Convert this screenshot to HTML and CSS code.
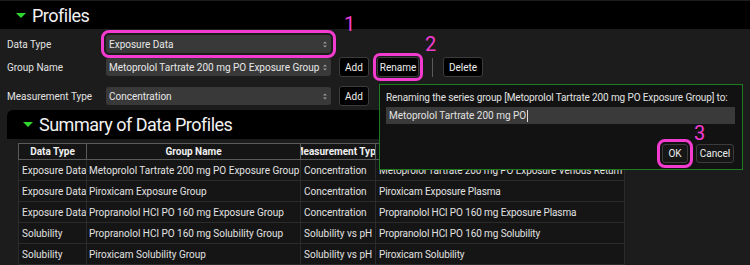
FILE: index.html
```html
<!DOCTYPE html>
<html lang="en">

<head>
  <meta charset="UTF-8">
  <meta name="viewport" content="width=device-width, initial-scale=1.0">
  <title>Profiles</title>
  <link rel="stylesheet" href="styles.css">
</head>

<body>
  <div class="app">
    <div class="bar top-bar">
      <span class="caret"></span>
      <h1>Profiles</h1>
    </div>

    <div class="form">
      <div class="row row-type">
        <label>Data Type</label>
        <div class="select hl">Exposure Data
          <svg class="spin" width="4" height="7" viewBox="0 0 4 7"><path d="M0 2.5 2 0.5 4 2.5ZM0 4.5 2 6.5 4 4.5Z" fill="#9a9a9a"/></svg>
        </div>
      </div>
      <div class="row row-group">
        <label>Group Name</label>
        <div class="select">Metoprolol Tartrate 200 mg PO Exposure Group
          <svg class="spin" width="4" height="7" viewBox="0 0 4 7"><path d="M0 2.5 2 0.5 4 2.5ZM0 4.5 2 6.5 4 4.5Z" fill="#9a9a9a"/></svg>
        </div>
        <button class="btn btn-add">Add</button>
        <button class="btn btn-rename hl">Rename</button>
        <span class="sep"></span>
        <button class="btn btn-delete">Delete</button>
      </div>
      <div class="row row-measure">
        <label>Measurement Type</label>
        <div class="select">Concentration
          <svg class="spin" width="4" height="7" viewBox="0 0 4 7"><path d="M0 2.5 2 0.5 4 2.5ZM0 4.5 2 6.5 4 4.5Z" fill="#9a9a9a"/></svg>
        </div>
        <button class="btn btn-add">Add</button>
      </div>
    </div>

    <div class="bar sub-bar">
      <span class="caret"></span>
      <h2>Summary of Data Profiles</h2>
    </div>

    <table class="profiles">
      <colgroup>
        <col class="c-type">
        <col class="c-group">
        <col class="c-measure">
        <col class="c-series">
      </colgroup>
      <thead>
        <tr>
          <th>Data Type</th>
          <th>Group Name</th>
          <th><div class="clip"><span>Measurement Type</span></div></th>
          <th>Observed Data</th>
        </tr>
      </thead>
      <tbody>
        <tr><td>Exposure Data</td><td>Metoprolol Tartrate 200 mg PO Exposure Group</td><td>Concentration</td><td>Metoprolol Tartrate 200 mg PO Exposure Venous Return</td></tr>
        <tr><td>Exposure Data</td><td>Piroxicam Exposure Group</td><td>Concentration</td><td>Piroxicam Exposure Plasma</td></tr>
        <tr><td>Exposure Data</td><td>Propranolol HCl PO 160 mg Exposure Group</td><td>Concentration</td><td>Propranolol HCl PO 160 mg Exposure Plasma</td></tr>
        <tr><td>Solubility</td><td>Propranolol HCl PO 160 mg Solubility Group</td><td>Solubility vs pH</td><td>Propranolol HCl PO 160 mg Solubility</td></tr>
        <tr><td>Solubility</td><td>Piroxicam Solubility Group</td><td>Solubility vs pH</td><td>Piroxicam Solubility</td></tr>
      </tbody>
    </table>

    <div class="dialog">
      <p>Renaming the series group [Metoprolol Tartrate 200 mg PO Exposure Group] to:</p>
      <div class="field">Metoprolol Tartrate 200 mg PO<span class="cursor"></span></div>
      <div class="actions">
        <button class="btn btn-ok hl">OK</button>
        <button class="btn btn-cancel">Cancel</button>
      </div>
    </div>

    <span class="mark mark-1">1</span>
    <span class="mark mark-2">2</span>
    <span class="mark mark-3">3</span>
  </div>
</body>

</html>
```

FILE: styles.css
```css
body {
  margin: 0;
  background: #1c1c1c;
  font-family: Roboto, "Noto Sans", sans-serif;
  font-size: 10px;
  color: #e2e2e2;
}

.app {
  --pink: #f43bd0;

  position: relative;
  width: 750px;
  height: 265px;
  padding-top: 1px;
  box-sizing: border-box;
  overflow: hidden;
}

.bar {
  display: flex;
  align-items: center;
  background: #000;
}

.top-bar {
  height: 28px;
  padding-left: 16px;
}

.sub-bar {
  height: 29px;
  margin: 4px 15px 0 7px;
  padding-left: 16px;
  border-radius: 6px 6px 0 0;
}

.caret {
  width: 0;
  height: 0;
  border-left: 5px solid transparent;
  border-right: 5px solid transparent;
  border-top: 5px solid #2fd62f;
  margin-right: 6px;
}

h1,
h2 {
  margin: 0;
  font-size: 18px;
  font-weight: 400;
  letter-spacing: -0.5px;
  color: #f2f2f2;
}

.form {
  padding: 5px 0 0 7px;
}

.row {
  display: flex;
  align-items: center;
  height: 20px;
}

.row label {
  width: 99px;
}

.row-group {
  margin-top: 3px;
}

.row-measure {
  margin-top: 9px;
}

.select {
  width: 225px;
  height: 18px;
  box-sizing: border-box;
  padding: 0 4px 0 3px;
  display: flex;
  align-items: center;
  justify-content: space-between;
  background: #393939;
  border-radius: 3px;
  color: #e8e8e8;
}

.btn {
  height: 20px;
  padding: 0;
  box-sizing: border-box;
  background: #000;
  border: 1px solid #3c3c3c;
  border-radius: 3px;
  color: #eee;
  font: inherit;
}

.btn-add {
  width: 30px;
  margin-left: 8px;
}

.btn-rename {
  width: 42px;
  margin-left: 8px;
}

.btn-delete {
  width: 40px;
}

.sep {
  width: 1px;
  height: 19px;
  background: #5a5a5a;
  margin: 0 10px 0 13px;
}

.hl {
  outline: 3px solid var(--pink);
  outline-offset: 2px;
}

.btn-rename.hl {
  outline-offset: 1px;
}

.profiles {
  width: 606px;
  margin: 4px 0 0 18px;
  table-layout: fixed;
  border-collapse: collapse;
  background: #151515;
}

.c-type { width: 68px; }
.c-group { width: 214px; }
.c-measure { width: 75px; }
.c-series { width: 249px; }

.profiles th {
  height: 15px;
  padding: 0;
  border: 1px solid #5b5b5b;
  font-weight: 700;
  color: #f0f0f0;
  white-space: nowrap;
  overflow: hidden;
}

.clip {
  display: flex;
  justify-content: center;
  overflow: hidden;
}

.clip span {
  flex: none;
}

.profiles td {
  height: 20px;
  padding: 0 3px;
  border: 1px solid #2b2b2b;
  white-space: nowrap;
  overflow: hidden;
}

.profiles td:nth-child(2) {
  padding-left: 2px;
}

.profiles td:nth-child(4) {
  letter-spacing: -0.1px;
}

.dialog {
  position: absolute;
  left: 379px;
  top: 84px;
  width: 364px;
  height: 86px;
  box-sizing: border-box;
  padding: 6px 7px 6px 6px;
  background: #121212;
  border: 1px solid #1e7b1e;
}

.dialog p {
  margin: 0;
  line-height: 13px;
  white-space: nowrap;
  letter-spacing: -0.12px;
}

.field {
  height: 17px;
  margin-top: 3px;
  padding-left: 3px;
  display: flex;
  align-items: center;
  background: #3a3a3a;
}

.cursor {
  width: 1px;
  height: 12px;
  margin-left: 1px;
  background: #ddd;
}

.actions {
  display: flex;
  justify-content: flex-end;
  gap: 8px;
  margin-top: 20px;
  padding-right: 1px;
}

.actions .btn {
  height: 19px;
  background: #161616;
}

.btn-ok {
  width: 26px;
}

.btn-cancel {
  width: 38px;
}

.mark {
  position: absolute;
  color: var(--pink);
  font-size: 20px;
  line-height: 20px;
}

.mark-1 { left: 344px; top: 14px; }
.mark-2 { left: 425px; top: 34px; }
.mark-3 { left: 694px; top: 123px; }
```
